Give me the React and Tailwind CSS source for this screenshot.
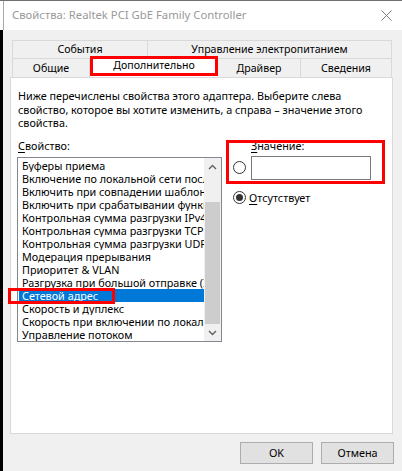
import React from 'react'

const items = [
  'Буферы приема',
  'Включение по локальной сети после выключения',
  'Включить при совпадении шаблона',
  'Включить при срабатывании функции Magic Packet',
  'Контрольная сумма разгрузки IPv4',
  'Контрольная сумма разгрузки TCP (IPv4)',
  'Контрольная сумма разгрузки UDP (IPv4)',
  'Модерация прерывания',
  'Приоритет & VLAN',
  'Разгрузка при большой отправке (IPv4)',
  'Сетевой адрес',
  'Скорость и дуплекс',
  'Скорость при включении по локальной сети',
  'Управление потоком',
]

function Radio({ checked }) {
  return (
    <div className="w-[13px] h-[13px] rounded-full border border-[#333333] bg-white flex items-center justify-center shrink-0">
      {checked && <div className="w-[7px] h-[7px] rounded-full bg-[#333333]" />}
    </div>
  )
}

function Chevron({ down }) {
  return (
    <svg width="9" height="6" viewBox="0 0 9 6">
      <polyline
        points={down ? '1,1 4.5,4.5 8,1' : '1,5 4.5,1.5 8,5'}
        fill="none"
        stroke="#606060"
        strokeWidth="1.4"
      />
    </svg>
  )
}

export default function App() {
  return (
    <div className="w-[402px] h-[471px] bg-[#f0f0f0] flex flex-col overflow-hidden font-['Noto_Sans',sans-serif] text-[10.8px] text-black">
      {/* title bar */}
      <div className="h-[30px] bg-white flex border-t border-[#707070] shrink-0">
        <div className="w-[4px] shrink-0 border-r border-[#aaaaaa]" />
        <div className="flex-1 min-w-0 flex items-center pl-[8px] text-[11.3px] text-[#999999] whitespace-nowrap">
          Свойства: Realtek PCI GbE Family Controller
        </div>
        <div className="w-[40px] shrink-0 flex items-center justify-end pr-[10px]">
          <svg width="11" height="11" viewBox="0 0 11 11">
            <path d="M0.5 0.5 L10.5 10.5 M10.5 0.5 L0.5 10.5" stroke="#7a7a7a" strokeWidth="1" />
          </svg>
        </div>
      </div>

      <div className="flex flex-1">
        <div className="w-[3px] shrink-0 bg-black" />
        <div className="flex-1 min-w-0 flex flex-col pl-[7px] pr-[9px]">
          {/* tabs */}
          <div className="pt-[10px] pl-[2px] pr-[1px] text-[10.6px]">
            <div className="flex h-[18px] border-t border-l border-[#d9d9d9]">
              <div className="w-[135px] border-r border-[#d9d9d9] flex items-center justify-center">События</div>
              <div className="flex-1 border-r border-[#d9d9d9] flex items-center justify-center">Управление электропитанием</div>
            </div>
            <div className="flex h-[19px] border-t border-l border-[#d9d9d9]">
              <div className="w-[77px] border-r border-[#d9d9d9] flex items-center justify-center pt-[1px]">Общие</div>
              <div className="relative w-[128px] h-[21px] -mt-[3px] bg-white z-10 flex items-center justify-center pb-[2px]">
                Дополнительно
                <div className="absolute left-0 top-0 w-[128px] h-[20px] border-[3px] border-[#ff0000]" />
              </div>
              <div className="w-[83px] border-r border-[#d9d9d9] flex items-center justify-center pt-[1px]">Драйвер</div>
              <div className="flex-1 border-r border-[#d9d9d9] flex items-center justify-center pt-[1px]">Сведения</div>
            </div>
          </div>

          {/* panel */}
          <div className="h-[357px] bg-white border border-[#d9d9d9] pt-[11px] pl-[6px] flex flex-col">
            <div className="pl-[1px] leading-[13.5px] whitespace-nowrap">
              Ниже перечислены свойства этого адаптера. Выберите слева
              <br />
              свойство, которое вы хотите изменить, а справа – значение этого
              <br />
              свойства.
            </div>

            <div className="flex mt-[9px]">
              {/* left column */}
              <div className="w-[205px] shrink-0 flex flex-col">
                <div className="pl-[1px] leading-[13.5px]">
                  <span className="underline underline-offset-2">С</span>войство:
                </div>
                <div className="mt-[5px] h-[185px] border border-[#828790] flex">
                  <div className="flex-1 min-w-0 pt-[1px] pl-[1px]">
                    {items.map((t, i) => (
                      <div
                        key={i}
                        className={
                          'relative h-[13px] leading-[13px] ' +
                          (i === 10 ? 'bg-[#0078d7] text-white' : '')
                        }
                      >
                        <div className="overflow-hidden whitespace-nowrap pl-[3px]">{t}</div>
                        {i === 10 && (
                          <div className="absolute left-[-11px] top-[-1px] w-[107px] h-[16px] border-[3px] border-[#ff0000]" />
                        )}
                      </div>
                    ))}
                  </div>
                  <div className="w-[17px] shrink-0 bg-[#f0f0f0] flex flex-col">
                    <div className="h-[17px] flex items-center justify-center">
                      <Chevron />
                    </div>
                    <div className="flex-1 px-[1px] flex flex-col justify-end">
                      <div className="h-[122px] bg-[#cdcdcd]" />
                    </div>
                    <div className="h-[17px] flex items-center justify-center">
                      <Chevron down />
                    </div>
                  </div>
                </div>
              </div>

              {/* right column */}
              <div className="relative ml-[4px] flex flex-col">
                <div className="pl-[25px] leading-[13.5px]">
                  <span className="underline underline-offset-2">З</span>начение:
                </div>
                <div className="flex items-center mt-[3.5px] pl-[7px]">
                  <Radio />
                  <div className="ml-[5px] w-[120px] h-[24px] border border-[#7a7a7a] bg-white" />
                </div>
                <div className="flex items-center mt-[11px] pl-[7px] h-[13.5px]">
                  <Radio checked />
                  <div className="ml-[3px] leading-[13.5px]">
                    <span className="underline underline-offset-2">О</span>тсутствует
                  </div>
                </div>
                <div className="absolute left-0 top-[1px] w-[159px] h-[44px] border-[3px] border-[#ff0000]" />
              </div>
            </div>
          </div>

          {/* buttons */}
          <div className="flex justify-end gap-[8px] mt-[8px] -mr-[1px]">
            <button className="w-[73px] h-[22px] bg-[#e1e1e1] border border-[#adadad] flex items-center justify-center">OK</button>
            <button className="w-[73px] h-[22px] bg-[#e1e1e1] border border-[#adadad] flex items-center justify-center">Отмена</button>
          </div>
        </div>
      </div>
    </div>
  )
}
